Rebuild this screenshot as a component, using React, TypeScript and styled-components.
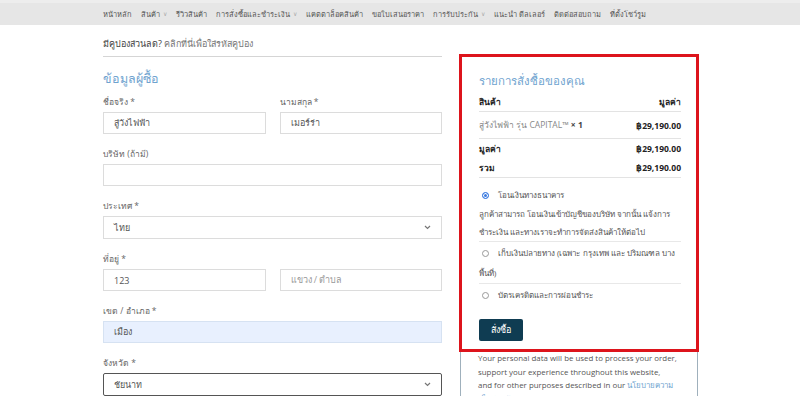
import React from 'react';
import styled, { createGlobalStyle } from 'styled-components';

const GlobalStyle = createGlobalStyle`
  body {
    margin: 0;
    background: #fff;
    font-family: "Open Sans", "Noto Sans", "Liberation Sans", sans-serif;
    color: #555;
  }
`;

const NavBar = styled.nav`
  height: 25px;
  background: #e6e6e6;
  border-top: 3px solid #ededed;
  box-sizing: border-box;
  display: flex;
  align-items: center;
  gap: 9px;
  padding-left: 103px;
  font-size: 7.45px;
  color: #555;
`;

const NavItem = styled.span`
  display: flex;
  align-items: center;
  gap: 3px;
  white-space: nowrap;
`;

const Caret = styled.span`
  color: #aaa;
  font-size: 6px;
`;

const Page = styled.div`
  display: flex;
  gap: 18px;
  padding: 0 102px 0 103px;
`;

const LeftCol = styled.div`
  width: 339px;
  flex-shrink: 0;
`;

const RightCol = styled.div`
  flex: 1;
  margin-top: 30px;
  border-left: 1px solid #9fb0bc;
  border-right: 1px solid #9fb0bc;
`;

const Coupon = styled.div`
  padding: 12px 0 6px;
  line-height: 13px;
  font-size: 9px;
  color: #444;
  border-bottom: 1px solid #d5d5d5;

  a {
    color: #777;
    text-decoration: none;
  }
`;

const Heading = styled.h3`
  margin: 13px 0 8px;
  font-size: 12.5px;
  line-height: 18px;
  font-weight: 400;
  color: #6fa3cf;
`;

const Row = styled.div`
  display: flex;
  gap: 14px;
`;

const Field = styled.div`
  display: flex;
  flex-direction: column;
  flex: 1;
  margin-bottom: 14px;
`;

const Label = styled.label`
  display: block;
  font-size: 8.5px;
  line-height: 12px;
  margin-bottom: 4px;
  color: #666;
`;

const Input = styled.div<{ filled?: boolean; placeholder?: boolean }>`
  height: 22px;
  box-sizing: border-box;
  border: 1px solid ${p => (p.filled ? '#d6e2f2' : '#dcdcdc')};
  background: ${p => (p.filled ? '#e8f0fe' : '#fff')};
  display: flex;
  align-items: center;
  padding: 0 10px;
  font-size: 9px;
  color: ${p => (p.placeholder ? '#999' : '#555')};
`;

const Select = styled(Input)<{ active?: boolean }>`
  height: 23px;
  justify-content: space-between;
  border-color: ${p => (p.active ? '#555' : '#dcdcdc')};
  border-radius: ${p => (p.active ? '2px' : '0')};
`;

const Chevron = () => (
  <svg width="7" height="5" viewBox="0 0 7 5">
    <path d="M1 1l2.5 2.5L6 1" stroke="#777" strokeWidth="1.2" fill="none" />
  </svg>
);

const OrderBox = styled.div`
  border: 3px solid #dd141c;
  margin: -1px -2px 0 -2px;
  padding: 16px 15px 8px 17px;
`;

const OrderTitle = styled.h3`
  margin: 0 0 3px;
  font-size: 11.5px;
  line-height: 16px;
  font-weight: 400;
  color: #6fa3cf;
`;

const TRow = styled.div<{ line?: boolean; tall?: boolean }>`
  display: flex;
  justify-content: space-between;
  align-items: center;
  font-size: 8.5px;
  height: ${p => (p.tall ? '26px' : '19px')};
  font-weight: 700;
  color: #222;
  border-bottom: ${p => (p.line ? '1px solid #e3e3e3' : 'none')};
`;

const ItemName = styled.span`
  font-weight: 400;
  color: #888;

  b {
    color: #444;
  }
`;

const Payment = styled.div`
  padding-top: 6px;
`;

const Method = styled.div<{ line?: boolean }>`
  border-bottom: ${p => (p.line ? '1px solid #e8e8e8' : 'none')};
  padding: 1px 0 0;
  font-size: 8px;
  color: #555;
`;

const RadioLine = styled.div`
  line-height: 20px;
`;

const Radio = styled.span<{ checked?: boolean }>`
  display: inline-block;
  vertical-align: -1px;
  width: 7px;
  height: 7px;
  border-radius: 50%;
  margin: 0 9px 0 3px;
  box-sizing: border-box;
  border: 1px solid ${p => (p.checked ? '#3b7be0' : '#999')};
  background: ${p => (p.checked ? '#3b7be0' : '#fff')};
  box-shadow: ${p => (p.checked ? 'inset 0 0 0 1px #fff' : 'none')};
`;

const Desc = styled.p`
  margin: 0;
  line-height: 18px;
  color: #555;
`;

const OrderButton = styled.button`
  margin-top: 14px;
  height: 22px;
  padding: 0 12px;
  background: #0f3c52;
  color: #fff;
  border: none;
  border-radius: 2px;
  font-family: inherit;
  font-size: 9px;
`;

const Privacy = styled.p`
  margin: 0;
  padding: 0 14px 0 17px;
  font-size: 7.9px;
  line-height: 13.5px;
  color: #555;

  a {
    color: #6fa3cf;
    text-decoration: none;
  }
`;

const navItems: [string, boolean][] = [
  ['หน้าหลัก', false],
  ['สินค้า', true],
  ['รีวิวสินค้า', false],
  ['การสั่งซื้อและชำระเงิน', true],
  ['แคตตาล็อคสินค้า', false],
  ['ขอใบเสนอราคา', false],
  ['การรับประกัน', true],
  ['แนะนำ ดีลเลอร์', false],
  ['ติดต่อสอบถาม', false],
  ['ที่ตั้งโชว์รูม', false],
];

export default function App() {
  return (
    <>
      <GlobalStyle />
      <NavBar>
        {navItems.map(([label, sub]) => (
          <NavItem key={label}>
            {label}
            {sub && <Caret>∨</Caret>}
          </NavItem>
        ))}
      </NavBar>
      <Page>
        <LeftCol>
          <Coupon>
            มีคูปองส่วนลด? <a href="#">คลิกที่นี่เพื่อใส่รหัสคูปอง</a>
          </Coupon>
          <Heading>ข้อมูลผู้ซื้อ</Heading>
          <Row>
            <Field>
              <Label>ชื่อจริง *</Label>
              <Input>สู่วังไฟฟ้า</Input>
            </Field>
            <Field>
              <Label>นามสกุล *</Label>
              <Input>เมอร์ร่า</Input>
            </Field>
          </Row>
          <Field>
            <Label>บริษัท (ถ้ามี)</Label>
            <Input />
          </Field>
          <Field>
            <Label>ประเทศ *</Label>
            <Select>
              ไทย
              <Chevron />
            </Select>
          </Field>
          <Label>ที่อยู่ *</Label>
          <Row>
            <Field>
              <Input>123</Input>
            </Field>
            <Field>
              <Input placeholder>แขวง / ตำบล</Input>
            </Field>
          </Row>
          <Field>
            <Label>เขต / อำเภอ *</Label>
            <Input filled>เมือง</Input>
          </Field>
          <Field>
            <Label>จังหวัด *</Label>
            <Select active>
              ชัยนาท
              <Chevron />
            </Select>
          </Field>
        </LeftCol>
        <RightCol>
          <OrderBox>
            <OrderTitle>รายการสั่งซื้อของคุณ</OrderTitle>
            <TRow line>
              <span>สินค้า</span>
              <span>มูลค่า</span>
            </TRow>
            <TRow line tall>
              <ItemName>
                สู่วังไฟฟ้า รุ่น CAPITAL™ <b>× 1</b>
              </ItemName>
              <span>฿29,190.00</span>
            </TRow>
            <TRow>
              <span>มูลค่า</span>
              <span>฿29,190.00</span>
            </TRow>
            <TRow line>
              <span>รวม</span>
              <span>฿29,190.00</span>
            </TRow>
            <Payment>
              <Method line>
                <RadioLine>
                  <Radio checked />
                  โอนเงินทางธนาคาร
                </RadioLine>
                <Desc>
                  ลูกค้าสามารถ โอนเงินเข้าบัญชีของบริษัท จากนั้น แจ้งการชำระเงิน และทางเราจะทำการจัดส่งสินค้าให้ต่อไป
                </Desc>
              </Method>
              <Method line>
                <RadioLine>
                  <Radio />
                  เก็บเงินปลายทาง (เฉพาะ กรุงเทพ และ ปริมณฑล บางพื้นที่)
                </RadioLine>
              </Method>
              <Method>
                <RadioLine>
                  <Radio />
                  บัตรเครดิตและการผ่อนชำระ
                </RadioLine>
              </Method>
            </Payment>
            <OrderButton>สั่งซื้อ</OrderButton>
          </OrderBox>
          <Privacy>
            Your personal data will be used to process your order, support your experience throughout this
            website,
            <br />
            and for other purposes described in our <a href="#">นโยบายความเป็นส่วนตัว</a>
          </Privacy>
        </RightCol>
      </Page>
    </>
  );
}
